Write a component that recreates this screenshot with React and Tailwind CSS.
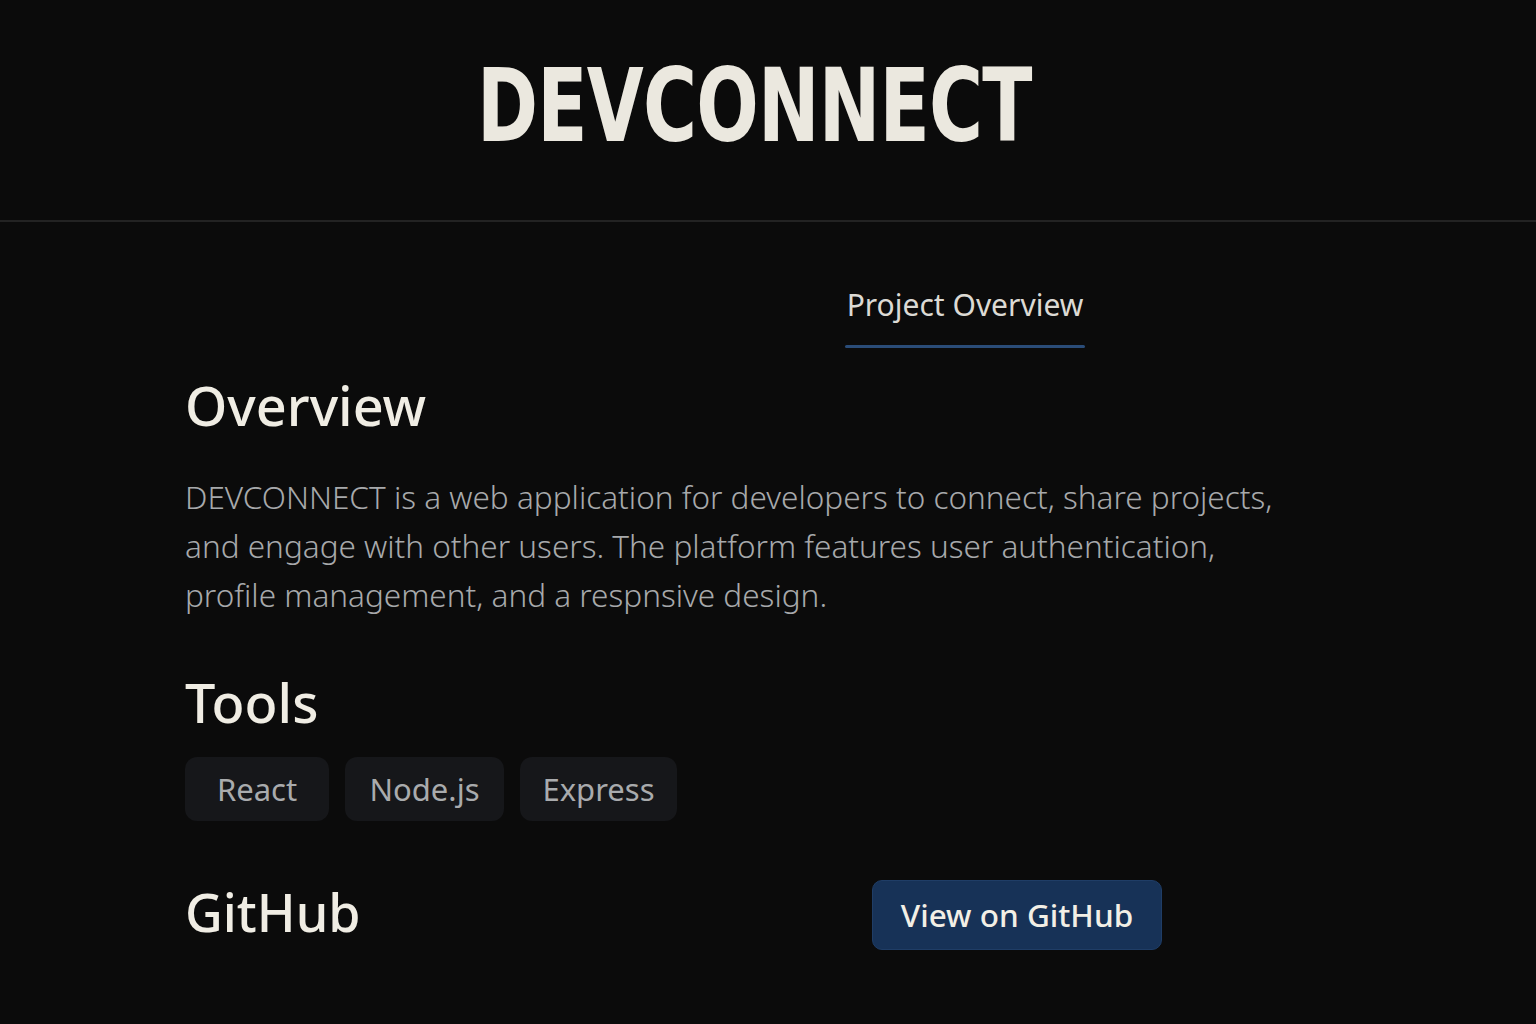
export default function App() {
  const tools = [
    { name: 'React', width: 'w-[144px]' },
    { name: 'Node.js', width: 'w-[159px]' },
    { name: 'Express', width: 'w-[157px]' },
  ]

  return (
    <div className="min-h-screen bg-[#0b0b0b] text-[#ece9df] font-['Noto_Sans',sans-serif]">
      <header className="h-[222px] border-b-2 border-[#232323] flex justify-center">
        <h1 className="mt-[56px] ml-[-27px] text-[101px] leading-none font-bold tracking-[-1px] text-[#ebe8df] font-['DejaVu_Sans_Condensed','Liberation_Sans_Narrow',sans-serif] scale-x-[0.81]">
          DEVCONNECT
        </h1>
      </header>

      <main className="pl-[185px] pr-[180px]">
        <div className="flex pl-[660px] pt-[68px]">
          <div className="flex flex-col items-center">
            <span className="text-[30px] leading-none text-[#dcdad4] pb-[25px]">Project Overview</span>
            <div className="h-[3px] w-[240px] rounded-full bg-[#2a4c78]" />
          </div>
        </div>

        <h2 className="mt-[30px] text-[54px] leading-none font-medium text-[#f0ede4]">Overview</h2>
        <p className="mt-[40px] max-w-[1115px] text-[31.5px] leading-[49px] font-light text-[#a7a9ab]">
          DEVCONNECT is a web application for developers to connect, share projects, and engage with other users. The
          platform features user authentication, profile management, and a respnsive design.
        </p>

        <h2 className="mt-[56px] text-[54px] leading-none font-medium text-[#f0ede4]">Tools</h2>
        <div className="mt-[28px] flex gap-4">
          {tools.map((tool) => (
            <span
              key={tool.name}
              className={`${tool.width} h-[64px] flex items-center justify-center rounded-xl bg-[#16171a] text-[31px] text-[#a9abad]`}
            >
              {tool.name}
            </span>
          ))}
        </div>

        <div className="mt-[59px] flex items-center">
          <h2 className="w-[687px] mb-[6px] text-[52px] leading-none font-medium text-[#f0ede4]">GitHub</h2>
          <button
            type="button"
            className="h-[70px] w-[290px] rounded-[10px] bg-[#173257] border border-[#1f3d66] text-[31.5px] font-medium text-[#f2efe6]"
          >
            View on GitHub
          </button>
        </div>
      </main>
    </div>
  )
}
